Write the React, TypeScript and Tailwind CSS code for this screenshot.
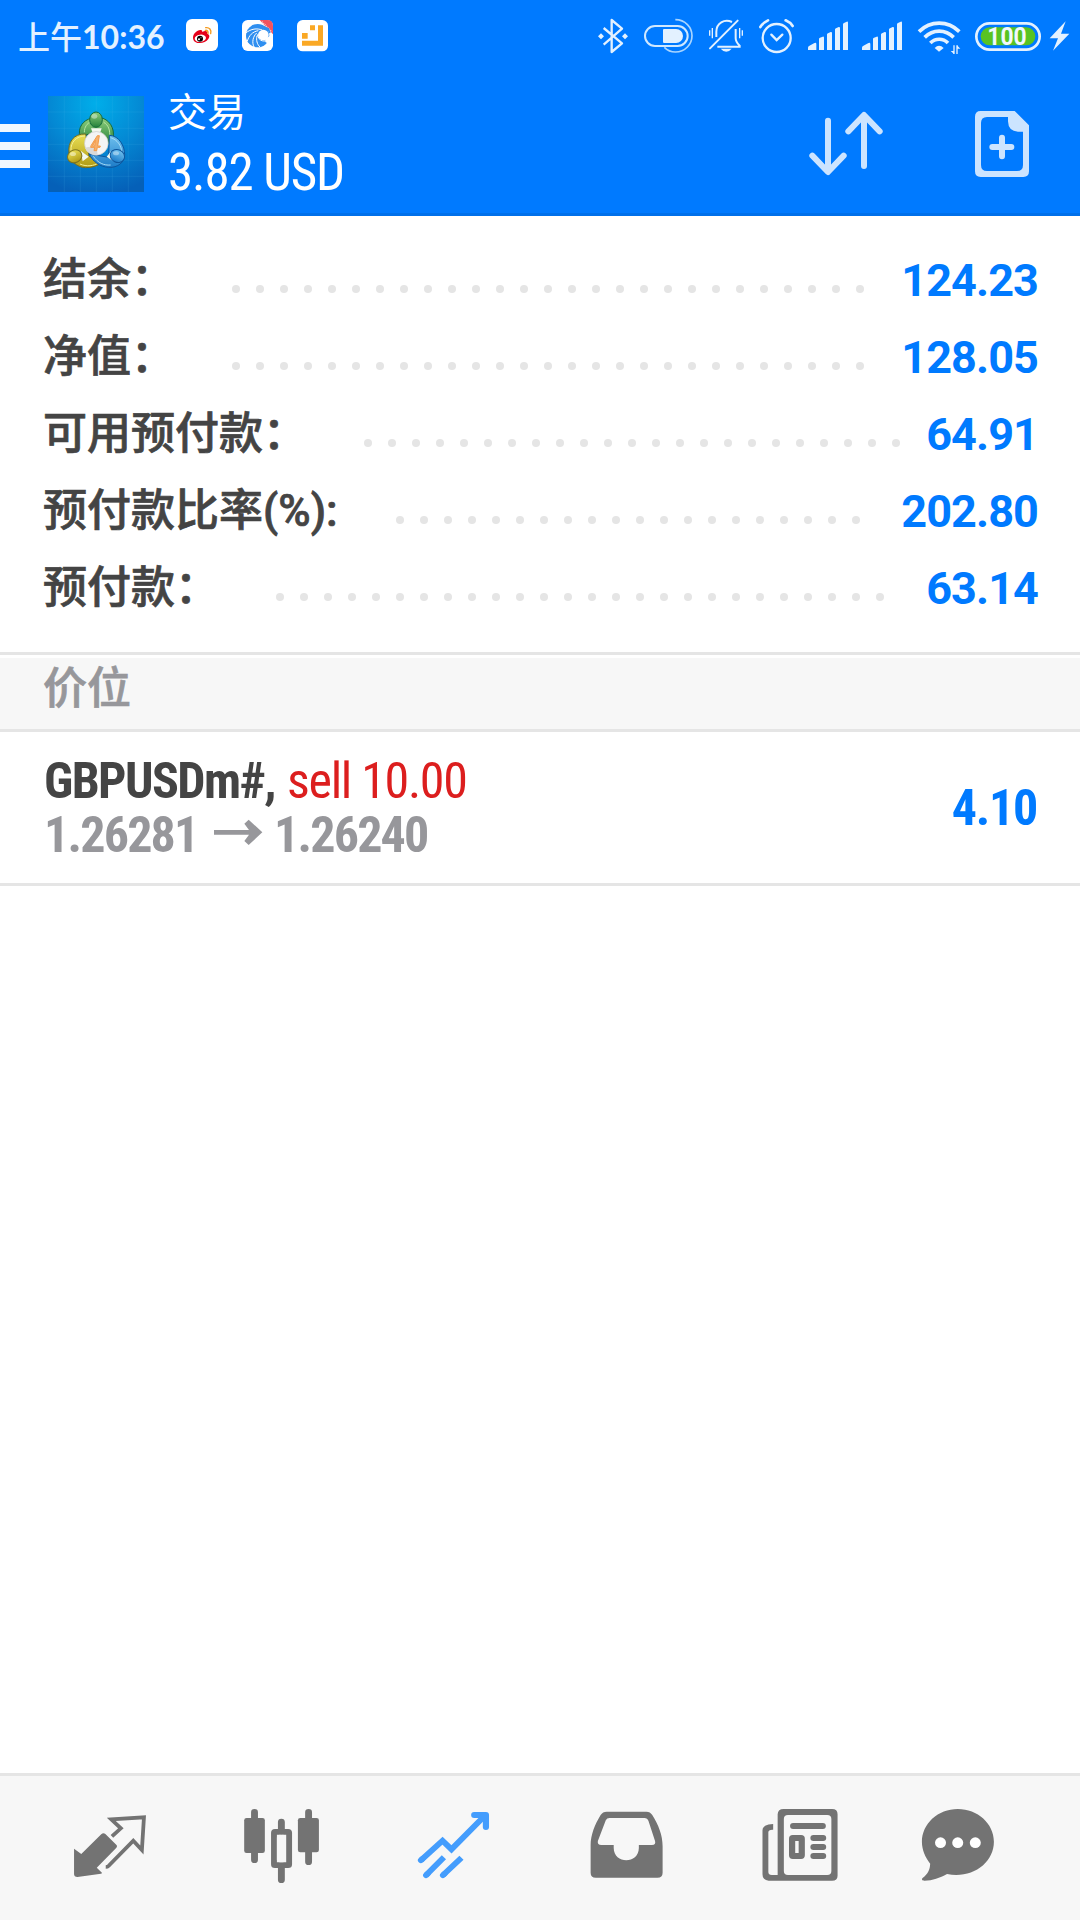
import type { ReactNode } from "react";

function Glyph({ box, className, stretch, children }: { box: string; className: string; stretch?: boolean; children: ReactNode }) {
  return (
    <svg
      viewBox={box}
      preserveAspectRatio={stretch ? "none" : undefined}
      className={`block shrink-0 ${className}`}
      fill="none"
      aria-hidden="true"
    >
      {children}
    </svg>
  );
}

function SignalBars() {
  return (
    <g fill="#e3f1ff">
      <path d="M24 150v-7q0-3 3-5l15-8q7-4 7 3v17z" />
      <path d="M57 150v-34q0-2 3-3l8-3q4-1 4 3v37z" />
      <path d="M81 150v-47q0-2 3-3l8-4q4-1 4 3v51z" />
      <path d="M105 150v-62q0-2 3-3l8-4q4-1 4 3v66z" />
      <path d="M129 150v-77q0-3 3-4l8-4q4-2 4 3v82z" />
    </g>
  );
}

function StatusBar() {
  return (
    <div className="flex h-[72px] items-start">
      <div className="ml-[18px] w-[168px] whitespace-nowrap font-['Lato','Noto_Sans_CJK_SC',sans-serif] text-[32px] font-medium leading-[73px] text-[#e3f1ff]">
        上午<span className="font-bold">10:36</span>
      </div>
      <Glyph box="558 0 165 216" className="h-[72px] w-[55px]">
        <rect x="558" y="57" width="96" height="96" rx="18" fill="#fff" />
        <path d="M579 113c0-12 13-24 23-23 5 1 5 4 5 6 8-5 18-3 15 5 8 3 7 10 3 16-6 9-18 13-29 12-10-1-17-7-17-16z" fill="#e6001a" />
        <ellipse cx="601" cy="115" rx="17" ry="11" fill="#fff" transform="rotate(-8 601 115)" />
        <circle cx="600" cy="116" r="9" fill="#000" />
        <circle cx="597" cy="118" r="3" fill="#fff" />
        <circle cx="603" cy="113" r="1.6" fill="#fff" />
        <path d="M617 83c11-2 18 7 15 18M616 91c6-1 9 3 8 9" stroke="#f39a1f" strokeWidth="4" strokeLinecap="round" />
      </Glyph>
      <Glyph box="723 0 165 216" className="h-[72px] w-[55px]">
        <rect x="726" y="60" width="93" height="93" rx="17" fill="#fff" />
        <path d="M779 60h23q17 0 17 17v26z" fill="#f1535f" />
        <path d="M786 65l30 31" stroke="#fbd3d6" strokeWidth="4" strokeDasharray="3 3" />
        <circle cx="773" cy="107" r="35" fill="#2f8ff0" />
        <circle cx="790" cy="105" r="16" fill="#fff" />
        <path d="M796 116l14-8v26l-14-8z" fill="#fff" />
        <path d="M771 103c3-21 32-24 37-3l4-1-5-14-14-7c-24-5-34 13-22 25z" fill="#2f8ff0" />
        <path d="M772 103c4 23 23 24 36 14M737 99c17-13 33-15 50-9M742 123c5-16 15-28 33-31M762 141c-7-14-3-32 8-42M780 141c-9-8-12-21-9-34" stroke="#fff" strokeWidth="3" />
      </Glyph>
      <Glyph box="888 0 165 216" className="h-[72px] w-[55px]">
        <rect x="891" y="60" width="93" height="94" rx="17" fill="#fff" />
        <path d="M930 76h15v15h-15zM906 99h17v17h-17zM954 76h15v61h-63v-15h48z" fill="#faa824" />
      </Glyph>

      <div className="ml-auto flex">
        <Glyph box="0 0 165 216" className="h-[72px] w-[55px]">
          <path d="M71 84l55 46-31 26V60l31 26-55 48" stroke="#e3f1ff" strokeWidth="7" strokeLinejoin="round" />
          <path d="M63 100l9 9-9 9-9-9zM135 100l9 9-9 9-9-9z" fill="#e3f1ff" />
        </Glyph>
        <Glyph box="165 0 195 216" className="h-[72px] w-[65px]">
          <rect x="195" y="78" width="128" height="60" rx="30" stroke="#cfe8ff" strokeWidth="6" />
          <path d="M252 87h36a21 21 0 010 42h-36q-3 0-3-3V90q0-3 3-3z" fill="#e3f1ff" />
          <path d="M286 59c30 0 50 23 50 48s-20 49-50 49q-19 0-33-14" stroke="#a9d5ff" strokeWidth="5" />
        </Glyph>
        <Glyph box="360 0 150 216" className="h-[72px] w-[50px]">
          <path d="M390 145l83-83" stroke="#e3f1ff" strokeWidth="6" strokeLinecap="round" />
          <path d="M409 111V95c0-25 24-40 47-29M467 87v28q0 11 12 22v3h-67" stroke="#e3f1ff" strokeWidth="6" />
          <path d="M422 146h33q-16 19-33 0z" fill="#e3f1ff" />
          <path d="M389 91v16M397 84v31M479 84v31M487 91v16" stroke="#e3f1ff" strokeWidth="4" />
        </Glyph>
        <Glyph box="510 0 150 216" className="h-[72px] w-[50px]">
          <circle cx="590" cy="114" r="42" stroke="#e3f1ff" strokeWidth="7" />
          <path d="M574 104l16 16 17-16" stroke="#e3f1ff" strokeWidth="7" strokeLinecap="round" />
          <path d="M541 81q8-13 23-20M638 78q-7-11-21-17" stroke="#e3f1ff" strokeWidth="8" strokeLinecap="round" />
        </Glyph>
        <Glyph box="0 0 162 216" className="h-[72px] w-[54px]">
          <SignalBars />
        </Glyph>
        <Glyph box="0 0 162 216" className="h-[72px] w-[54px]">
          <SignalBars />
        </Glyph>
        <Glyph box="984 0 174 216" className="h-[72px] w-[58px]">
          <path d="M1017 95c34-34 87-34 121 0M1034 112c25-25 62-25 87 0M1051 129c15-15 38-15 53 0" stroke="#e3f1ff" strokeWidth="11" />
          <path d="M1064 144q13-14 27 0l-14 11z" fill="#e3f1ff" />
          <path d="M1122 136v26M1131 136v26" stroke="#e3f1ff" strokeWidth="4" />
          <path d="M1112 153h10v9zM1131 136l10 10h-10z" fill="#e3f1ff" />
        </Glyph>
        <Glyph box="1158 0 240 216" className="h-[72px] w-[80px]">
          <rect x="1189" y="70" width="190" height="79" rx="39.5" stroke="#e3f1ff" strokeWidth="8" />
          <rect x="1202" y="82" width="164" height="54" rx="27" fill="#58c322" />
          <text x="1281" y="135" textAnchor="middle" className="font-['Roboto',sans-serif] text-[77px] font-bold" fill="#f1f8ff" textLength="118" lengthAdjust="spacingAndGlyphs">
            100
          </text>
        </Glyph>
        <Glyph box="1398 0 102 216" className="h-[72px] w-[34px]">
          <path d="M1457 64l-48 51h25l-15 37 49-51h-25z" fill="#e3f1ff" />
        </Glyph>
      </div>
    </div>
  );
}

function AppLogo() {
  return (
    <Glyph box="54 48 288 288" className="size-24">
      <defs>
        <radialGradient id="sky" cx=".5" cy=".08" r=".95">
          <stop offset="0" stopColor="#00aeea" />
          <stop offset=".5" stopColor="#0489d4" />
          <stop offset="1" stopColor="#0560b8" />
        </radialGradient>
        <linearGradient id="green" x1="0" y1="0" x2="0" y2="1">
          <stop offset="0" stopColor="#8fcf7c" />
          <stop offset="1" stopColor="#24803a" />
        </linearGradient>
        <linearGradient id="yellow" x1="0" y1="0" x2="0" y2="1">
          <stop offset="0" stopColor="#e9df55" />
          <stop offset="1" stopColor="#b09a14" />
        </linearGradient>
        <linearGradient id="blue" x1="0" y1="0" x2="0" y2="1">
          <stop offset="0" stopColor="#6fc0ee" />
          <stop offset="1" stopColor="#1d7cc8" />
        </linearGradient>
      </defs>
      <rect x="54" y="48" width="288" height="288" fill="url(#sky)" />
      <path
        d="M54 96h288M54 145h288M54 193h288M54 241h288M54 289h288M103 48v288M151 48v288M199 48v288M247 48v288M295 48v288"
        stroke="#5cc4f0"
        strokeOpacity=".2"
        strokeWidth="2"
      />
      <path d="M150 170c-8-27 10-50 34-55h35c26 10 39 40 27 73l-22 4-25-35z" fill="url(#green)" stroke="#14693a" strokeWidth="3" />
      <path d="M163 157c0-16 8-27 20-32M239 171c2-20-4-37-18-44" stroke="#b9e6a4" strokeWidth="3" />
      <path d="M167 162c-37-2-54 26-50 57 2 20 22 44 50 44 22 0 40-7 52-18l-42-16z" fill="url(#yellow)" stroke="#6f6b22" strokeWidth="3" />
      <path d="M166 168c-28 0-44 19-43 43M150 252c20 9 42 6 56-4" stroke="#f4ef96" strokeWidth="3" />
      <path d="M238 166c30 1 46 33 46 58 0 22-20 40-48 38-26-1-49-18-58-40l58 10z" fill="url(#blue)" stroke="#0d559c" strokeWidth="3" />
      <path d="M242 173c20 6 32 24 33 42M190 229c14 20 32 28 52 26" stroke="#a7dcf7" strokeWidth="3" />
      <path d="M183 145h32l-5 14h-22zM152 212l24 18-18 14zM244 212l-14 18 18 12z" fill="#f3f8ee" />
      <ellipse cx="198" cy="119" rx="19" ry="23" fill="url(#green)" stroke="#14693a" strokeWidth="3" />
      <ellipse cx="134" cy="229" rx="22" ry="19" fill="url(#yellow)" stroke="#7b731e" strokeWidth="3" transform="rotate(-25 134 229)" />
      <ellipse cx="262" cy="228" rx="22" ry="19" fill="url(#blue)" stroke="#0d559c" strokeWidth="3" transform="rotate(25 262 228)" />
      <ellipse cx="193" cy="109" rx="9" ry="7" fill="#fff" fillOpacity=".4" />
      <ellipse cx="129" cy="222" rx="9" ry="6" fill="#fff" fillOpacity=".45" />
      <ellipse cx="258" cy="220" rx="9" ry="6" fill="#fff" fillOpacity=".4" />
      <circle cx="199" cy="190" r="35.5" fill="#f4f4f4" stroke="#c9c9c9" strokeWidth="2" />
      <path d="M165 203q20-6 35 0l3 22q-32-1-38-22z" fill="#d9d9d9" />
      <path d="M202 167h6l-5 31h8l-1 4h-8l-2 10h-8l2-10h-12l1-5zM196 181l-8 17h6z" fill="#f7b06a" stroke="#f39a48" strokeWidth="3" strokeLinejoin="round" />
    </Glyph>
  );
}

function AppBar() {
  return (
    <div className="flex h-[141px] items-start">
      <div className="mt-[52px] flex w-[30px] flex-col gap-[10px]">
        <div className="h-2 bg-[#f0f7ff]" />
        <div className="h-2 bg-[#f0f7ff]" />
        <div className="h-2 bg-[#f0f7ff]" />
      </div>
      <div className="ml-[18px] mt-6">
        <AppLogo />
      </div>
      <div className="ml-6 mt-[10px] w-[300px] whitespace-nowrap text-white">
        <div className="font-['Noto_Sans_CJK_SC',sans-serif] text-[39px] font-normal leading-[54px]">交易</div>
        <div className="pt-[2px] font-['Roboto',sans-serif] text-[51px] leading-[70px] tracking-[-1.1px] [font-stretch:75%]">3.82 USD</div>
      </div>
      <Glyph box="0 0 450 369" className="ml-auto mt-[18px] h-[123px] w-[150px]">
        <path d="M144 92v152M97 197l47 49 47-49M252 228V76M205 124l47-49 47 49" stroke="#cce4ff" strokeWidth="18" strokeLinecap="round" strokeLinejoin="round" />
      </Glyph>
      <Glyph box="450 0 450 369" className="mt-[18px] h-[123px] w-[150px]">
        <path
          d="M602 63h102l43 43v138q0 17-17 17H602q-17 0-17-17V80q0-17 17-17zm19 18q-18 0-18 18v126q0 18 18 18h90q18 0 18-18V125h-14q-30 0-31-31V81z"
          fill="#cce4ff"
          fillRule="evenodd"
        />
        <path d="M666 143v56M637 171h57" stroke="#cce4ff" strokeWidth="18" strokeLinecap="round" />
      </Glyph>
    </div>
  );
}

const summary = [
  { label: "结余：", value: "124.23", dots: 27, labelClass: "w-[189px]" },
  { label: "净值：", value: "128.05", dots: 27, labelClass: "w-[189px]" },
  { label: "可用预付款：", value: "64.91", dots: 23, labelClass: "w-[321px]" },
  { label: "预付款比率(%):", value: "202.80", dots: 20, labelClass: "w-[353px]" },
  { label: "预付款：", value: "63.14", dots: 26, labelClass: "w-[233px]" },
];

function Summary() {
  return (
    <section className="h-[436px] bg-white pt-[26px]">
      {summary.map((row) => (
        <div key={row.label} className="flex h-[77px] items-start pl-[43px]">
          <div
            className={`shrink-0 whitespace-nowrap font-['Roboto','Noto_Sans_CJK_SC',sans-serif] text-[44px] font-medium leading-[77px] text-[#444] [-webkit-text-stroke:0.7px_#444] ${row.labelClass}`}
          >
            {row.label}
          </div>
          <div className="mt-[43px] flex gap-4">
            {Array.from({ length: row.dots }, (_, i) => (
              <span key={i} className="size-2 rounded-full bg-[#e5e5e5]" />
            ))}
          </div>
          <div className="ml-auto pr-[42px] font-['Roboto',sans-serif] text-[45px] font-bold leading-[77px] tracking-[-0.9px] text-[#007aff]">
            {row.value}
          </div>
        </div>
      ))}
    </section>
  );
}

function Position() {
  return (
    <section className="flex h-[154px] items-start justify-between border-b-3 border-[#e5e5e5] bg-white pl-11 pr-[43px] font-['Roboto',sans-serif] text-[50px] [font-stretch:75%]">
      <div className="whitespace-nowrap pt-[22px]">
        <div className="flex leading-[54px]">
          <span className="w-[243px] font-bold tracking-[-1.6px] text-[#444]">GBPUSDm#,</span>
          <span className="tracking-[-1.3px] text-[#dc1e1e]">sell 10.00</span>
        </div>
        <div className="flex font-bold leading-[54px] tracking-[-1.8px] text-[#97979b]">
          <span className="w-[170px]">1.26281</span>
          <Glyph box="642 504 180 162" className="h-[54px] w-[60px]">
            <path d="M642 570h105l-14-19 13-12 41 38-41 38-13-12 14-19H642z" fill="#97979b" />
          </Glyph>
          <span>1.26240</span>
        </div>
      </div>
      <div className="font-bold leading-[153px] tracking-[-1.3px] text-[#007aff]">4.10</div>
    </section>
  );
}

function TabBar() {
  const cell = "h-[144px] w-[172px]";
  return (
    <nav className="flex h-[147px] border-t-3 border-[#e5e5e5] bg-[#f7f7f7] pl-6">
      <Glyph stretch box="69.7 48 499.4 432" className={cell}>
        <path d="M215 266l21 16 58-59q6-6 12-1l33 34q2 4-1 7l-57 60 15 15q0 3-3 3l-68 10q-10 0-10-9z" fill="#737373" />
        <path d="M325 229l26-24-28-27 95-6-6 98-25-28-72 76q-3 3-8 3" stroke="#737373" strokeWidth="11" />
      </Glyph>
      <Glyph stretch box="569.1 48 499.4 432" className={cell}>
        <path d="M739 157v142M896 157v148M817 186v28M817 320v39" stroke="#737373" strokeWidth="20" strokeLinecap="round" />
        <rect x="709" y="174" width="60" height="105" rx="7" fill="#737373" />
        <rect x="865" y="174" width="61" height="103" rx="7" fill="#737373" />
        <rect x="795.5" y="215.5" width="44" height="100" rx="3" stroke="#737373" strokeWidth="17" />
        <path d="M804 233q0-9 9-9h8q9 0 9 9v65q0 9-9 9h-8q-9 0-9-9z" fill="#f7f7f7" />
      </Glyph>
      <Glyph stretch box="1068.6 48 499.4 432" className={cell}>
        <g stroke="#449dfd" strokeWidth="17">
          <path d="M1222 301l63-59 26 26 98-102" />
          <path d="M1222 301l5-5M1237 346l5-5M1286 346l5-5" strokeLinecap="round" />
          <path d="M1377 165h34v36" strokeLinecap="round" strokeLinejoin="round" strokeWidth="18" />
          <path d="M1237 346l52-54M1286 346l54-53" />
        </g>
      </Glyph>
      <Glyph stretch box="0 48 499.4 432" className={cell}>
        <path
          d="M194 155h115q11 0 17 10c18 30 30 60 30 94v79q0 15-15 15H162q-15 0-15-15v-83c0-30 12-61 29-90q6-10 18-10zm8 19q-8 0-11 7l-23 62q-2 12 10 12h36v9c0 49 73 49 73 0v-9h38q12 0 9-12l-19-60q-3-9-12-9z"
          fill="#737373"
          fillRule="evenodd"
        />
      </Glyph>
      <Glyph stretch box="499.4 48 499.4 432" className={cell}>
        <path
          d="M707 147h141q16 0 16 16v184q0 15-16 15H664q-18-1-18-19V211q0-18 31-19v17q-14-1-14 8v119q0 9 10 9h17V163q1-16 17-16zm13 18q-12 0-12 12v156q0 12 12 12h114q12 0 12-12V177q0-12-12-12z"
          fill="#737373"
          fillRule="evenodd"
        />
        <path d="M735 198h86M794 234h28M794 261h28M794 288h28" stroke="#737373" strokeWidth="18" strokeLinecap="round" />
        <rect x="732" y="234" width="28" height="54" rx="2" stroke="#737373" strokeWidth="18" />
      </Glyph>
      <Glyph stretch box="998.9 48 499.4 432" className={cell}>
        <path d="M1213 147c58 0 105 44 105 98 0 64-64 112-136 97-22 12-41 20-66 20-6 0-9-4-5-8 16-14 21-24 22-43-14-19-24-41-24-65 0-55 47-99 104-99z" fill="#737373" />
        <circle cx="1163" cy="248" r="16" fill="#fff" />
        <circle cx="1213" cy="248" r="16" fill="#fff" />
        <circle cx="1264" cy="248" r="16" fill="#fff" />
      </Glyph>
    </nav>
  );
}

export default function App() {
  return (
    <div className="flex h-[1920px] w-[1080px] flex-col overflow-hidden bg-white">
      <header className="h-[216px] shrink-0 border-b-3 border-[#0070ea] bg-[#007aff]">
        <StatusBar />
        <AppBar />
      </header>
      <Summary />
      <div className="h-[6px] shrink-0 border-t-3 border-[#e5e5e5] bg-white" />
      <div className="h-[74px] shrink-0 border-b-3 border-[#e5e5e5] bg-[#f7f7f7] pl-[43px] font-['Noto_Sans_CJK_SC',sans-serif] text-[44px] font-medium leading-[55px] text-[#97979b] [-webkit-text-stroke:0.7px_#97979b]">
        价位
      </div>
      <Position />
      <main className="flex-1 bg-white" />
      <TabBar />
    </div>
  );
}
